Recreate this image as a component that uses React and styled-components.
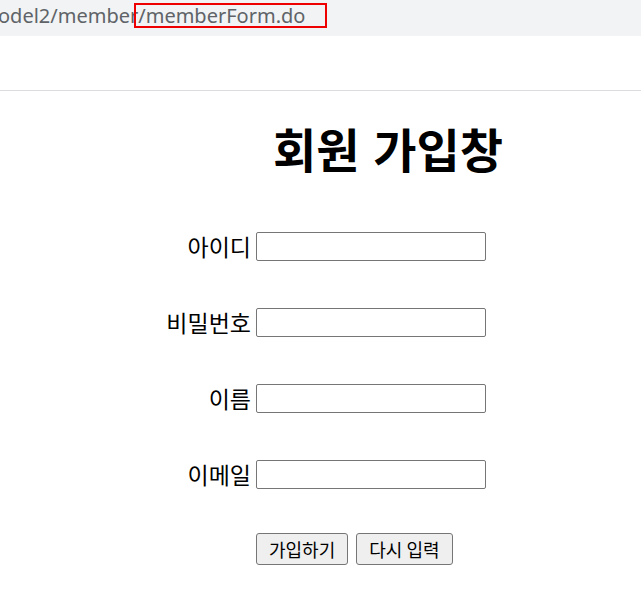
import React from "react";
import styled, { createGlobalStyle } from "styled-components";

const GlobalStyle = createGlobalStyle`
  html, body {
    margin: 0;
    padding: 0;
    overflow: hidden;
    background: #ffffff;
  }
  body {
    font-family: "Noto Sans CJK KR", "Noto Sans", sans-serif;
  }
`;

const AddressBar = styled.div`
  height: 36px;
  background: #f1f3f4;
  display: flex;
  align-items: flex-start;
  white-space: nowrap;
  overflow: hidden;
  font-family: "Noto Sans", "Noto Sans CJK KR", sans-serif;
  font-size: 20px;
  color: #5f6368;
`;

const UrlText = styled.span`
  margin-left: -2px;
  padding-top: 3px;
  line-height: 24px;
`;

const Highlight = styled.span`
  display: inline-block;
  border: 2px solid #ee0000;
  padding: 1px 20px 0 2px;
  margin-left: -4px;
  line-height: 20px;
`;

const Toolbar = styled.div`
  height: 54px;
  border-bottom: 1px solid #dadce0;
`;

const Page = styled.main`
  width: 776px;
  padding-top: 24px;
`;

const Title = styled.h1`
  margin: 0;
  text-align: center;
  font-size: 47px;
  font-weight: 700;
  line-height: 66px;
  color: #000;
  word-spacing: 3px;
`;

const Form = styled.form`
  display: grid;
  grid-template-columns: 251px 230px;
  column-gap: 5px;
  row-gap: 47px;
  margin-top: 51px;
  align-items: center;
`;

const Label = styled.label`
  text-align: right;
  font-size: 23px;
  line-height: 29px;
  color: #000;
`;

const Input = styled.input`
  box-sizing: border-box;
  width: 230px;
  height: 29px;
  border: 1px solid #767676;
  border-radius: 2px;
  padding: 1px 4px;
  font-size: 16px;
`;

const ButtonRow = styled.div`
  grid-column: 2;
  display: flex;
  gap: 8px;
  margin-top: -3px;
`;

const Button = styled.button`
  box-sizing: border-box;
  height: 32px;
  padding: 0 12px;
  background: #efefef;
  border: 1px solid #767676;
  border-radius: 3px;
  font-family: "Noto Sans CJK KR", sans-serif;
  font-size: 18px;
  line-height: 30px;
  color: #000;
`;

const fields = [
  { id: "id", label: "아이디", type: "text" },
  { id: "pwd", label: "비밀번호", type: "password" },
  { id: "name", label: "이름", type: "text" },
  { id: "email", label: "이메일", type: "text" },
];

export default function App() {
  return (
    <>
      <GlobalStyle />
      <AddressBar>
        <UrlText>
          odel2/member
          <Highlight>/memberForm.do</Highlight>
        </UrlText>
      </AddressBar>
      <Toolbar />
      <Page>
        <Title>회원 가입창</Title>
        <Form>
          {fields.map((f) => (
            <React.Fragment key={f.id}>
              <Label htmlFor={f.id}>{f.label}</Label>
              <Input id={f.id} name={f.id} type={f.type} />
            </React.Fragment>
          ))}
          <ButtonRow>
            <Button type="submit">가입하기</Button>
            <Button type="reset">다시 입력</Button>
          </ButtonRow>
        </Form>
      </Page>
    </>
  );
}
